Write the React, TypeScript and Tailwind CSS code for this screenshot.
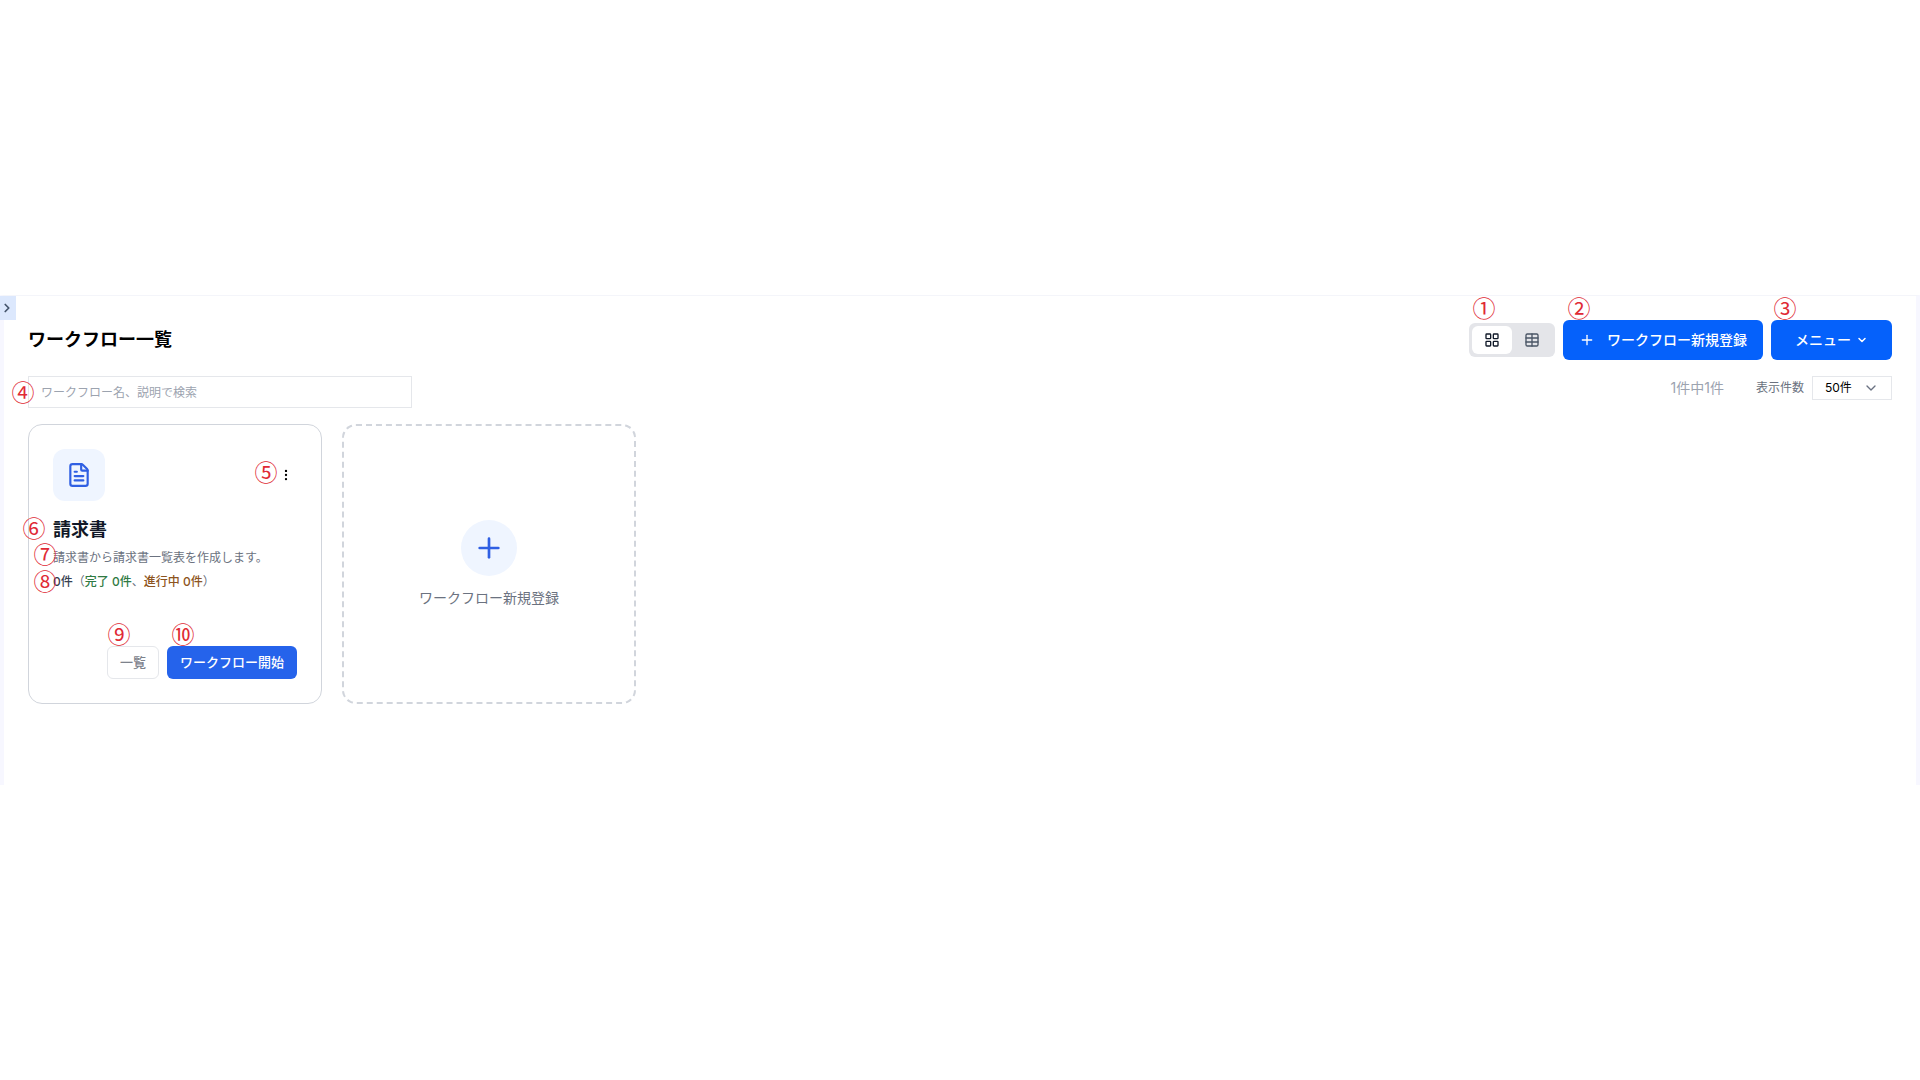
import type { ReactNode } from 'react';
import { ChevronDown, ChevronRight, EllipsisVertical, FileText, LayoutGrid, Plus, Table } from 'lucide-react';
import clsx from 'clsx';

type Workflow = {
  id: number;
  name: string;
  description: string;
  done: number;
  running: number;
};

const workflows: Workflow[] = [
  { id: 1, name: '請求書', description: '請求書から請求書一覧表を作成します。', done: 0, running: 0 },
];

function Marker({ className, children }: { className: string; children: ReactNode }) {
  return (
    <span
      className={clsx(
        'pointer-events-none absolute z-10 flex size-[22px] items-center justify-center pb-[2px] font-["Noto_Sans_CJK_JP",sans-serif] text-[23px] leading-none font-normal text-[#e02a35]',
        className,
      )}
    >
      {children}
    </span>
  );
}

function ViewToggle() {
  return (
    <div className="relative flex rounded-md bg-[#e4e5e9] p-[3px]">
      <Marker className="-top-[26px] left-1">①</Marker>
      <button aria-label="カード表示" className="flex h-7 w-10 items-center justify-center rounded-md bg-white text-gray-900">
        <LayoutGrid className="size-4" />
      </button>
      <button aria-label="表形式" className="flex h-7 w-10 items-center justify-center rounded-md text-gray-600">
        <Table className="size-4" />
      </button>
    </div>
  );
}

function WorkflowCard({ workflow }: { workflow: Workflow }) {
  return (
    <article className="flex min-h-[280px] flex-col rounded-[14px] border border-gray-300 bg-white p-6">
      <div className="flex items-center justify-between">
        <div className="flex size-[52px] items-center justify-center rounded-xl bg-[#eff5ff] text-[#2f5fe3]">
          <FileText className="size-[26px]" />
        </div>
        <button aria-label="操作" className="relative flex h-6 w-[22px] items-center justify-center text-black">
          <Marker className="-left-5 -top-[2px]">⑤</Marker>
          <EllipsisVertical className="size-[14px]" />
        </button>
      </div>

      <h2 className="relative mt-4 text-lg leading-[26px] font-bold text-[#111827]">
        <Marker className="-left-[30px] top-0">⑥</Marker>
        {workflow.name}
      </h2>
      <p className="relative mt-[7px] text-xs leading-4 text-[#6b7280]">
        <Marker className="-left-[19px] -top-[7px]">⑦</Marker>
        {workflow.description}
      </p>
      <p className="relative mt-2 text-xs leading-4 text-[#6b7280]">
        <Marker className="-left-[19px] -top-1">⑧</Marker>
        <span className="font-medium text-[#374151]">{workflow.done + workflow.running}件</span>
        （<span className="font-medium text-[#2f7a43]">完了 {workflow.done}件</span>、
        <span className="font-medium text-[#8d5420]">進行中 {workflow.running}件</span>）
      </p>

      <div className="mt-auto flex justify-end gap-2">
        <button className="relative h-[33px] rounded-md border border-gray-200 px-3 text-[13px] font-medium text-[#7d828c]">
          <Marker className="-top-6 left-0">⑨</Marker>
          一覧
        </button>
        <button className="relative h-[33px] rounded-md bg-[#2563eb] px-[13px] text-[13px] font-medium text-white">
          <Marker className="-top-[23px] left-[5px]">⑩</Marker>
          ワークフロー開始
        </button>
      </div>
    </article>
  );
}

function NewWorkflowCard() {
  return (
    <button className="flex min-h-[280px] flex-col items-center justify-center gap-3 rounded-[14px] border-2 border-dashed border-gray-300 text-sm text-[#6b7280]">
      <span className="flex size-14 items-center justify-center rounded-full bg-[#eff5ff] text-[#2f5fe3]">
        <Plus className="size-8" />
      </span>
      ワークフロー新規登録
    </button>
  );
}

export default function App() {
  return (
    <div className="flex min-h-screen flex-col justify-center bg-white font-[Inter,'Noto_Sans_CJK_JP',sans-serif]">
      <main className="relative min-h-[490px] border-x-4 border-t border-x-[#f7f7ff] border-t-[#f4f5fa] bg-white px-6 pt-6">
        <button aria-label="サイドバーを開く" className="absolute top-0 -left-1 flex h-6 w-4 items-center bg-[#dce8fd] text-slate-600">
          <ChevronRight className="size-[14px]" strokeWidth={3} />
        </button>

        <header className="flex items-center justify-between">
          <h1 className="text-lg font-bold text-black">ワークフロー一覧</h1>
          <div className="flex items-center gap-2">
            <ViewToggle />
            <button className="relative flex h-10 items-center gap-3 rounded-md bg-[#0561fb] px-4 text-sm font-medium text-white">
              <Marker className="-top-[23px] left-[5px]">②</Marker>
              <Plus className="size-4" strokeWidth={2} />
              ワークフロー新規登録
            </button>
            <button className="relative flex h-10 items-center gap-[5px] rounded-md bg-[#0561fb] px-6 text-sm font-medium text-white">
              <Marker className="-top-[23px] left-[3px]">③</Marker>
              メニュー
              <ChevronDown className="size-3" strokeWidth={3} />
            </button>
          </div>
        </header>

        <div className="mt-4 flex items-start justify-between">
          <div className="relative w-96">
            <Marker className="top-[5px] -left-4">④</Marker>
            <input
              type="text"
              aria-label="ワークフロー検索"
              placeholder="ワークフロー名、説明で検索"
              className="h-8 w-full border border-gray-200 px-3 text-xs text-gray-900 outline-none placeholder:text-[#9ca3af]"
            />
          </div>
          <div className="flex items-center">
            <span className="mr-8 text-sm text-[#9ca3af]">1件中1件</span>
            <label htmlFor="page-size" className="mr-2 text-xs text-[#6b7280]">
              表示件数
            </label>
            <div className="relative">
              <select
                id="page-size"
                defaultValue="50"
                className="block h-6 w-20 appearance-none border border-gray-200 bg-white pl-3 text-xs text-black outline-none"
              >
                <option value="20">20件</option>
                <option value="50">50件</option>
                <option value="100">100件</option>
              </select>
              <ChevronDown className="pointer-events-none absolute top-1 right-[13px] size-4 text-gray-500" strokeWidth={2} />
            </div>
          </div>
        </div>

        <section className="mt-4 grid grid-cols-2 gap-5 lg:grid-cols-4 xl:grid-cols-6">
          {workflows.map((workflow) => (
            <WorkflowCard key={workflow.id} workflow={workflow} />
          ))}
          <NewWorkflowCard />
        </section>
      </main>
    </div>
  );
}
